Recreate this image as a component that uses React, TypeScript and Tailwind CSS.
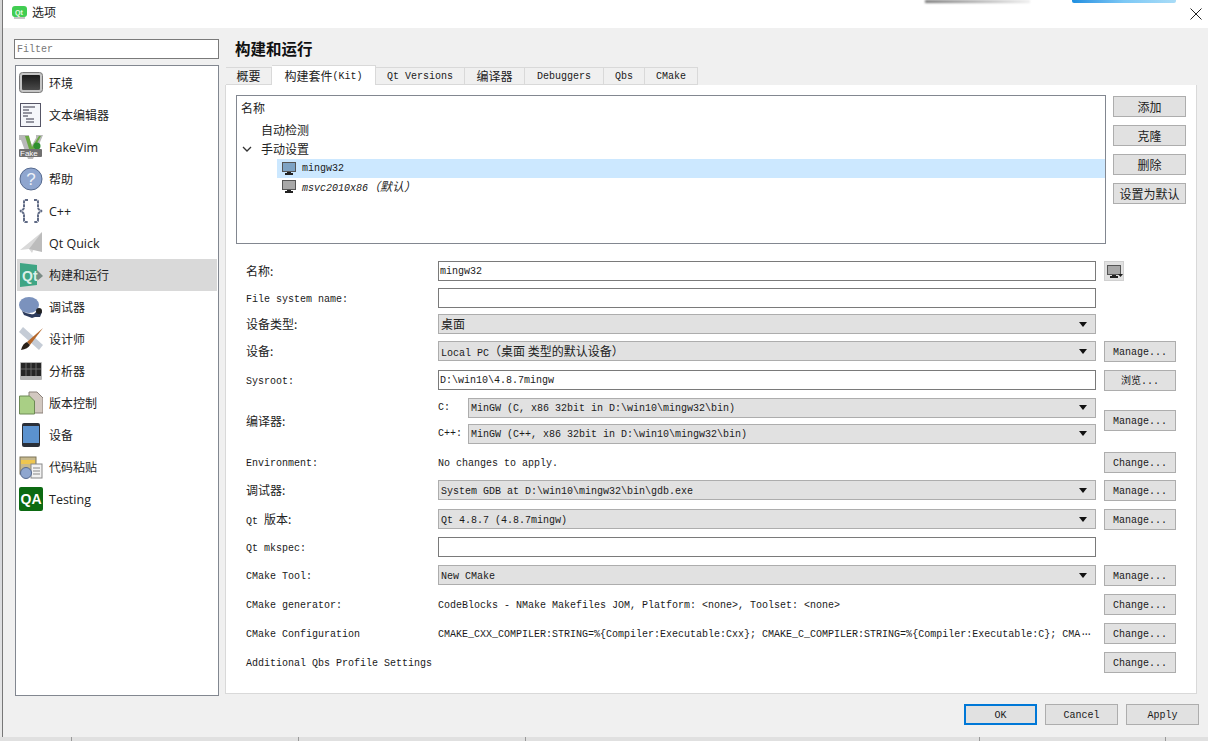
import React from 'react';

const mono = "font-['Liberation_Mono','Noto_Sans_CJK_SC',monospace] text-[10px] text-[#1a1a1a]";
const zh = "font-['Noto_Sans_CJK_SC',sans-serif] text-[12px] text-[#222]";

function Zh({ children }: { children: React.ReactNode }) {
  return <span className={zh}>{children}</span>;
}

function Monitor({ shade = '#a8a8a8' }: { shade?: string }) {
  return (
    <svg width="14" height="13" viewBox="0 0 14 13">
      <rect x="0.5" y="0.5" width="13" height="9" fill={shade} stroke="#555" />
      <rect x="5" y="10" width="4" height="1" fill="#222" />
      <rect x="3" y="11" width="8" height="2" fill="#222" />
    </svg>
  );
}

function NavIcon({ name }: { name: string }) {
  switch (name) {
    case 'env':
      return (
        <svg width="24" height="24" viewBox="0 0 24 24">
          <defs>
            <linearGradient id="screen" x1="0" y1="0" x2="0" y2="1">
              <stop offset="0" stopColor="#1a1a1a" />
              <stop offset="1" stopColor="#4a4a4a" />
            </linearGradient>
          </defs>
          <rect x="0.500" y="1.500" width="23" height="20" rx="3" fill="#c4c4c4" stroke="#777" />
          <rect x="3" y="4" width="18" height="15" rx="1" fill="url(#screen)" />
        </svg>
      );
    case 'doc':
      return (
        <svg width="24" height="24" viewBox="0 0 24 24">
          <rect x="1.500" y="0.500" width="20" height="23" fill="#f4f6fa" stroke="#556" />
          <path d="M4 4h12M4 7h6M4 10h9M4 13h5M7 16h8M7 19h8" stroke="#334" fill="none" />
        </svg>
      );
    case 'vim':
      return (
        <svg width="24" height="24" viewBox="0 0 24 24">
          <path d="M0 0h10v3l3 7 4-7V0h7L14 24H9L2 5H0z" fill="#b9b9b9" />
          <path d="M6 1h4l3 11 7-11h2L13 17h-2z" fill="#6aa843" />
          <circle cx="18" cy="11" r="3.500" fill="#2f8f2f" />
          <rect x="0" y="14" width="23" height="8" rx="1" fill="#707070" />
          <text x="1" y="21" fontSize="8" fontFamily="Liberation Sans" fill="#fff">Fake</text>
        </svg>
      );
    case 'help':
      return (
        <svg width="24" height="24" viewBox="0 0 24 24">
          <circle cx="12" cy="12" r="11" fill="#8fa6cf" stroke="#566a8f" />
          <text x="12" y="18" textAnchor="middle" fontSize="17" fontFamily="Liberation Sans" fill="#eef2f8">?</text>
        </svg>
      );
    case 'cpp':
      return (
        <svg width="24" height="24" viewBox="0 0 24 24">
          <path d="M9 1H6.500Q5 1 5 3v5q0 3-4 4 4 1 4 4v5q0 2 1.500 2H9" fill="none" stroke="#5f6a85" strokeWidth="2" strokeDasharray="3 0.600" />
          <path d="M15 1h2.500Q19 1 19 3v5q0 3 4 4-4 1-4 4v5q0 2-1.500 2H15" fill="none" stroke="#5f6a85" strokeWidth="2" strokeDasharray="3 0.600" />
        </svg>
      );
    case 'quick':
      return (
        <svg width="24" height="24" viewBox="0 0 24 24">
          <path d="M23 1 1 19l9-1 3 4z" fill="#d9d9d9" />
          <path d="M23 1 10 18l13 3z" fill="#bcbcbc" />
        </svg>
      );
    case 'build':
      return (
        <svg width="24" height="24" viewBox="0 0 24 24">
          <path d="M1 0 18 2v20L1 24z" fill="#3fa584" />
          <path d="m18 7 6 6-6 5z" fill="#7a8a85" />
          <text x="3" y="18" fontSize="14" fontWeight="700" fontFamily="Liberation Sans" fill="#dcefe8">Qt</text>
        </svg>
      );
    case 'debug':
      return (
        <svg width="24" height="24" viewBox="0 0 24 24">
          <ellipse cx="10" cy="10" rx="10" ry="8" fill="#7b92bd" />
          <path d="M3 16q6 4 12 3l4-4 4 2-2 5-5 0-3 1-8-3z" fill="#2d3b5c" />
          <circle cx="20" cy="16" r="3" fill="#222" />
        </svg>
      );
    case 'design':
      return (
        <svg width="24" height="24" viewBox="0 0 24 24">
          <path d="M0 5 4 0l20 18-4 5z" fill="#c5ccd6" />
          <path d="M24 1 8 15l3 3z" fill="#b5672a" />
          <path d="M8 15q-4 1-6 8 7-1 9-5z" fill="#2b2118" />
        </svg>
      );
    case 'analyze':
      return (
        <svg width="24" height="24" viewBox="0 0 24 24">
          <rect x="1" y="3" width="22" height="18" rx="1" fill="#b5b5b5" />
          <rect x="2" y="4" width="20" height="13" fill="#262626" />
          <path d="M7 4v13M12 4v13M17 4v13M2 10h20" stroke="#666" />
        </svg>
      );
    case 'vcs':
      return (
        <svg width="24" height="24" viewBox="0 0 24 24">
          <path d="M10 1h8l6 6v15H10z" fill="#d2c8c0" stroke="#8b817a" />
          <path d="M0.500 5h10l5 5v13H0.500z" fill="#a9cf85" stroke="#6d8a55" />
        </svg>
      );
    case 'device':
      return (
        <svg width="24" height="24" viewBox="0 0 24 24">
          <rect x="3" y="0" width="18" height="24" rx="2" fill="#2a2f38" />
          <rect x="4" y="3" width="16" height="17" fill="#5b92cf" />
        </svg>
      );
    case 'paste':
      return (
        <svg width="24" height="24" viewBox="0 0 24 24">
          <rect x="1" y="2" width="16" height="17" fill="#c7b98d" stroke="#7d7458" />
          <rect x="2" y="5" width="14" height="4" fill="#eec64f" />
          <rect x="12" y="9" width="11" height="14" fill="#f2f2f2" stroke="#888" />
          <path d="M14 13h7M14 16h7M14 19h7" stroke="#888" />
          <circle cx="7" cy="18" r="5.500" fill="#8ea6cf" stroke="#566a8f" />
        </svg>
      );
    default:
      return (
        <svg width="24" height="24" viewBox="0 0 24 24">
          <rect width="24" height="24" rx="2" fill="#0c6a12" />
          <text x="12" y="17" textAnchor="middle" fontSize="14" fontWeight="700" fontFamily="Liberation Sans" fill="#fff">QA</text>
        </svg>
      );
  }
}

const navItems = [
  { icon: 'env', label: '环境', zh: true },
  { icon: 'doc', label: '文本编辑器', zh: true },
  { icon: 'vim', label: 'FakeVim' },
  { icon: 'help', label: '帮助', zh: true },
  { icon: 'cpp', label: 'C++' },
  { icon: 'quick', label: 'Qt Quick' },
  { icon: 'build', label: '构建和运行', zh: true, active: true },
  { icon: 'debug', label: '调试器', zh: true },
  { icon: 'design', label: '设计师', zh: true },
  { icon: 'analyze', label: '分析器', zh: true },
  { icon: 'vcs', label: '版本控制', zh: true },
  { icon: 'device', label: '设备', zh: true },
  { icon: 'paste', label: '代码粘贴', zh: true },
  { icon: 'qa', label: 'Testing' },
];

const tabs = [
  { label: '概要', w: 'w-[46px]', zh: true },
  { label: '构建套件(Kit)', w: 'w-[104px]', active: true },
  { label: 'Qt Versions', w: 'w-[89px]' },
  { label: '编译器', w: 'w-[60px]', zh: true },
  { label: 'Debuggers', w: 'w-[79px]' },
  { label: 'Qbs', w: 'w-[41px]' },
  { label: 'CMake', w: 'w-[53px]' },
];

function Btn({ children, className = 'w-[72px]' }: { children: React.ReactNode; className?: string }) {
  const nudge = typeof children === 'string' ? 'pt-[2px]' : '';
  return (
    <div className={`${className} ${nudge} h-[21px] shrink-0 bg-[#e1e1e1] border border-[#adadad] flex items-center justify-center ${mono}`}>
      {children}
    </div>
  );
}

function Combo({ children, className = 'w-[658px]' }: { children: React.ReactNode; className?: string }) {
  const nudge = typeof children === 'string' ? 'pt-[2px]' : '';
  return (
    <div className={`${className} h-[20px] shrink-0 bg-[#e1e1e1] border border-[#adadad] flex items-center pl-[2px] pr-[8px]`}>
      <div className={`flex-1 whitespace-nowrap ${nudge} ${mono}`}>{children}</div>
      <div className="w-0 h-0 border-x-[4px] border-x-transparent border-t-[5px] border-t-[#111]" />
    </div>
  );
}

function Field({ children }: { children?: React.ReactNode }) {
  return (
    <div className={`w-[658px] h-[20px] shrink-0 bg-white border border-[#7a7a7a] flex items-center pl-[1px] pt-[1px] whitespace-nowrap ${mono}`}>
      {children}
    </div>
  );
}

function Row({ label, mt, children, action }: { label: React.ReactNode; mt: string; children?: React.ReactNode; action?: string }) {
  const nudge = typeof label === 'string' ? 'pt-[2px]' : '';
  return (
    <div className={`flex items-center h-[20px] ${mt}`}>
      <div className={`w-[192px] shrink-0 whitespace-nowrap ${nudge} ${mono}`}>{label}</div>
      {children}
      {action && <Btn className="w-[72px] ml-[8px]">{action}</Btn>}
    </div>
  );
}

export default function App() {
  return (
    <div className="w-[1208px] h-[741px] overflow-hidden bg-white relative flex flex-col">
      {/* window behind the dialog peeks out at the top */}
      <div className="absolute top-0 left-[925px] w-[105px] h-[3px] bg-gradient-to-r from-[#777] to-[#eee] blur-[1px]" />
      <div className="absolute top-0 left-[1072px] w-[104px] h-[3px] rounded-b-[2px] bg-gradient-to-r from-[#1c8fe0] via-[#7cc8f5] to-[#a9dcf7]" />

      <div className="flex-1 flex min-h-0">
        <div className="w-[2px] shrink-0 bg-gradient-to-b from-[#d8d8d8] via-[#c4c7cf] to-[#e8e8e8]" />
        <div className="flex-1 flex flex-col border-l border-b border-[#777] min-w-0">
          <div className="h-[28px] shrink-0 bg-white flex items-center pl-[9px] pr-[5px] pb-[4px]">
            <svg width="15" height="15" viewBox="0 0 15 15">
              <path d="M2 11h11v3H2z" fill="#c4c4c4" />
              <rect x="0" y="1" width="15" height="11" rx="3" fill="#41cd52" />
              <text x="3" y="9.500" fontSize="7" fontWeight="700" fontFamily="Liberation Sans" fill="#e9fbe9">Qt</text>
            </svg>
            <span className={`${zh} ml-[5px]`}>选项</span>
            <svg className="ml-auto mt-[4px]" width="14" height="14" viewBox="0 0 14 14">
              <path d="M1.500 1.500l11 11M12.500 1.500l-11 11" stroke="#222" />
            </svg>
          </div>

          <div className="flex-1 bg-[#f0f0f0] flex flex-col pl-[11px]">
            <div className="flex flex-1">
              {/* sidebar */}
              <div className="w-[205px] shrink-0 flex flex-col pt-[11px]">
                <div className={`h-[20px] bg-white border border-[#7a7a7a] flex items-center pl-[2px] pt-[1px] ${mono} text-[#777]`}>Filter</div>
                <div className="mt-[6px] ml-[1px] h-[631px] bg-white border border-[#828790] pt-[1px] pl-[1px] pr-[1px]">
                  {navItems.map((item) => (
                    <div key={item.icon} className={`h-[32px] flex items-center pl-[2px] ${item.active ? 'bg-[#d9d9d9]' : ''}`}>
                      <div className="w-[24px] h-[24px] shrink-0">
                        <NavIcon name={item.icon} />
                      </div>
                      <span className={`ml-[6px] whitespace-nowrap ${item.zh ? zh : "font-['Open_Sans',sans-serif] text-[12.5px] text-[#222] pt-[2px]"}`}>
                        {item.label}
                      </span>
                    </div>
                  ))}
                </div>
              </div>

              {/* main */}
              <div className="flex-1 flex flex-col pl-[6px]">
                <div className="h-[37px] pl-[10px] pt-[9px] shrink-0">
                  <span className="font-['Noto_Sans_CJK_SC',sans-serif] text-[15.500px] font-bold leading-[22px] text-[#111]">构建和运行</span>
                </div>
                <div className="h-[20px] flex items-end shrink-0 pl-[1px]">
                  {tabs.map((t) => (
                    <div
                      key={t.label}
                      className={`${t.w} flex items-center justify-center border-[#d9d9d9] border-t border-r ${
                        t.active ? 'h-[20px] bg-white' : 'h-[18px] bg-[#f0f0f0] border-b'
                      } whitespace-nowrap ${t.zh ? zh : `${mono} pt-[1px]`}`}
                    >
                      {t.active ? (
                        <>
                          <Zh>构建套件</Zh>(Kit)
                        </>
                      ) : (
                        t.label
                      )}
                    </div>
                  ))}
                </div>

                <div className="h-[609px] w-[972px] bg-white border border-[#d9d9d9] border-t-0 pl-[10px] pt-[10px] shrink-0">
                  <div className="flex">
                    <div className="w-[870px] h-[149px] shrink-0 border border-[#828790] bg-white pt-[3px]">
                      <div className={`${zh} pl-[4px] h-[18px] leading-[18px]`}>名称</div>
                      <div className={`${zh} pl-[24px] mt-[3px] h-[19px] leading-[19px]`}>自动检测</div>
                      <div className="flex items-center h-[19px] mb-[1px]">
                        <svg className="ml-[5px]" width="10" height="10" viewBox="0 0 10 10">
                          <path d="M1 3l4 4 4-4" fill="none" stroke="#333" strokeWidth="1.300" />
                        </svg>
                        <span className={`${zh} ml-[9px]`}>手动设置</span>
                      </div>
                      <div className="ml-[40px] h-[19px] bg-[#cce8ff] flex items-center pl-[5px]">
                        <Monitor shade="#7ea3c4" />
                        <span className={`${mono} ml-[6px]`}>mingw32</span>
                      </div>
                      <div className="ml-[40px] h-[17px] flex items-center pl-[5px]">
                        <Monitor />
                        <span className={`${mono} italic ml-[6px]`}>
                          msvc2010x86<span className={`${zh} italic`}>（默认）</span>
                        </span>
                      </div>
                    </div>
                    <div className="ml-[7px] pt-[1px] flex flex-col gap-[8px]">
                      <Btn className="w-[73px]"><Zh>添加</Zh></Btn>
                      <Btn className="w-[73px]"><Zh>克隆</Zh></Btn>
                      <Btn className="w-[73px]"><Zh>删除</Zh></Btn>
                      <Btn className="w-[73px]"><Zh>设置为默认</Zh></Btn>
                    </div>
                  </div>

                  <div className="pl-[10px]">
                    <Row label={<Zh>名称:</Zh>} mt="mt-[17px]">
                      <Field>mingw32</Field>
                      <div className="ml-[8px] w-[20px] h-[20px] bg-[#e1e1e1] border border-[#d0d0d0] flex items-center pl-[2px] gap-[0px]">
                        <Monitor />
                        <svg className="-ml-[3px] mt-[9px]" width="5" height="3" viewBox="0 0 5 3">
                          <path d="M0 0h5L2.500 3z" fill="#222" />
                        </svg>
                      </div>
                    </Row>
                    <Row label="File system name:" mt="mt-[7px]"><Field /></Row>
                    <Row label={<Zh>设备类型:</Zh>} mt="mt-[6px]"><Combo><Zh>桌面</Zh></Combo></Row>
                    <Row label={<Zh>设备:</Zh>} mt="mt-[7px]" action="Manage...">
                      <Combo>Local PC<Zh>（桌面 类型的默认设备）</Zh></Combo>
                    </Row>
                    <Row label="Sysroot:" mt="mt-[9px]" action="浏览...">
                      <Field>D:\win10\4.8.7mingw</Field>
                    </Row>
                    <div className="flex items-center h-[45px] mt-[8px]">
                      <div className="w-[192px] shrink-0 -mt-[1px]"><Zh>编译器:</Zh></div>
                      <div className="w-[658px] shrink-0 flex flex-col gap-[6px]">
                        <div className="flex items-center">
                          <span className={`w-[30px] ${mono}`}>C:</span>
                          <Combo className="w-[628px]">MinGW (C, x86 32bit in D:\win10\mingw32\bin)</Combo>
                        </div>
                        <div className="flex items-center">
                          <span className={`w-[30px] ${mono}`}>C++:</span>
                          <Combo className="w-[628px]">MinGW (C++, x86 32bit in D:\win10\mingw32\bin)</Combo>
                        </div>
                      </div>
                      <Btn className="w-[72px] ml-[8px]">Manage...</Btn>
                    </div>
                    <Row label="Environment:" mt="mt-[9px]" action="Change...">
                      <div className={`w-[658px] pt-[2px] ${mono}`}>No changes to apply.</div>
                    </Row>
                    <Row label={<Zh>调试器:</Zh>} mt="mt-[8px]" action="Manage...">
                      <Combo>System GDB at D:\win10\mingw32\bin\gdb.exe</Combo>
                    </Row>
                    <Row label={<>Qt <Zh>版本:</Zh></>} mt="mt-[9px]" action="Manage...">
                      <Combo>Qt 4.8.7 (4.8.7mingw)</Combo>
                    </Row>
                    <Row label="Qt mkspec:" mt="mt-[8px]"><Field /></Row>
                    <Row label="CMake Tool:" mt="mt-[8px]" action="Manage...">
                      <Combo>New CMake</Combo>
                    </Row>
                    <Row label="CMake generator:" mt="mt-[9px]" action="Change...">
                      <div className={`w-[658px] pt-[2px] ${mono}`}>CodeBlocks - NMake Makefiles JOM, Platform: &lt;none&gt;, Toolset: &lt;none&gt;</div>
                    </Row>
                    <Row label="CMake Configuration" mt="mt-[9px]" action="Change...">
                      <div className={`w-[658px] pt-[2px] whitespace-nowrap ${mono}`}>
                        CMAKE_CXX_COMPILER:STRING=%{'{'}Compiler:Executable:Cxx{'}'}; CMAKE_C_COMPILER:STRING=%{'{'}Compiler:Executable:C{'}'}; CMA<span className="tracking-[-3px]">···</span>
                      </div>
                    </Row>
                    <Row label="Additional Qbs Profile Settings" mt="mt-[9px]" action="Change...">
                      <div className="w-[658px]" />
                    </Row>
                  </div>
                </div>
              </div>
            </div>

            <div className="h-[42px] shrink-0 flex justify-end items-start pt-[8px]">
              <div className={`w-[73px] h-[21px] bg-[#e1e1e1] border-2 border-[#0078d7] flex items-center justify-center pt-[1px] ${mono}`}>OK</div>
              <Btn className="w-[73px] ml-[8px]">Cancel</Btn>
              <Btn className="w-[73px] ml-[8px] mr-[9px]">Apply</Btn>
            </div>
          </div>
        </div>
      </div>

      {/* taskbar strip under the dialog */}
      <div className="h-[4px] shrink-0 bg-[#e0e0e0] flex">
        <div className="w-[72px] border-r border-[#999]" />
        <div className="w-[227px] border-r border-[#999]" />
        <div className="w-[227px] border-r border-[#999]" />
        <div className="w-[454px] border-r border-[#999]" />
        <div className="w-[186px] border-r border-[#999]" />
      </div>
    </div>
  );
}
